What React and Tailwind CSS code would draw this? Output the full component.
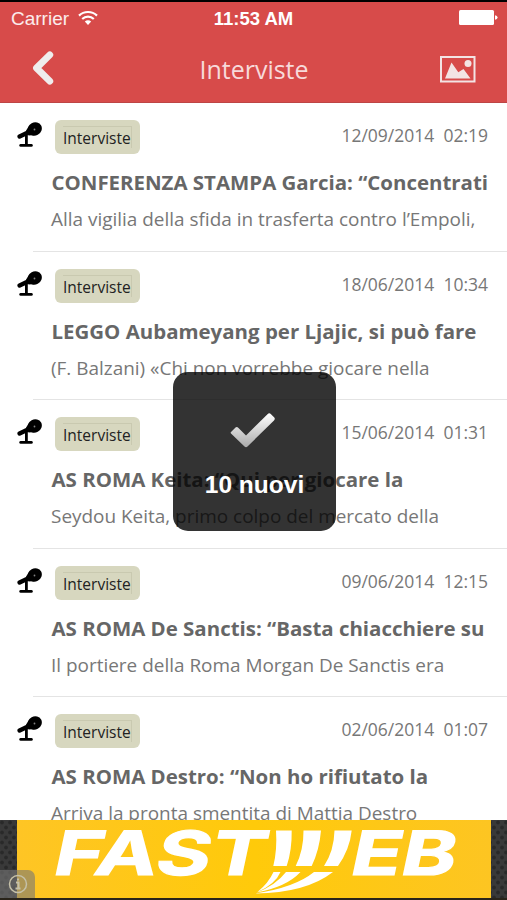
const articles = [
  {
    date: '12/09/2014',
    time: '02:19',
    title: 'CONFERENZA STAMPA Garcia: “Concentrati',
    excerpt: 'Alla vigilia della sfida in trasferta contro l’Empoli,',
  },
  {
    date: '18/06/2014',
    time: '10:34',
    title: 'LEGGO Aubameyang per Ljajic, si può fare',
    excerpt: '(F. Balzani) «Chi non vorrebbe giocare nella',
  },
  {
    date: '15/06/2014',
    time: '01:31',
    title: 'AS ROMA Keita: “Qui per giocare la',
    excerpt: 'Seydou Keita, primo colpo del mercato della',
  },
  {
    date: '09/06/2014',
    time: '12:15',
    title: 'AS ROMA De Sanctis: “Basta chiacchiere su',
    excerpt: 'Il portiere della Roma Morgan De Sanctis era',
  },
  {
    date: '02/06/2014',
    time: '01:07',
    title: 'AS ROMA Destro: “Non ho rifiutato la',
    excerpt: 'Arriva la pronta smentita di Mattia Destro',
  },
];

const WifiIcon = () => (
  <svg className="w-5 h-4" viewBox="0 0 20 16" fill="none" stroke="white" strokeWidth="2.2">
    <path d="M1 5.6a13 13 0 0 1 18 0" />
    <path d="M4.2 9a8.4 8.4 0 0 1 11.6 0" />
    <path d="M6.8 11.6a4.8 4.8 0 0 1 6.4 0L10 15z" fill="white" stroke="none" />
  </svg>
);

const BatteryIcon = () => (
  <svg className="w-[39px] h-[15px]" viewBox="0 0 39 15" fill="white">
    <rect width="35" height="15" rx="1.5" />
    <path d="M36 5.2q2.6.6 2.6 2.3T36 9.8z" />
  </svg>
);

const MicIcon = () => (
  <svg className="w-[26px] h-[26px] shrink-0" viewBox="0 0 26 26" fill="black">
    <path d="M2.6 14.5 12.5 9.8" fill="none" stroke="black" strokeWidth="4.4" strokeLinecap="round" />
    <path d="M9 8.5 12 4.500 18 13 11.500 13.500z" />
    <ellipse cx="17.700" cy="7" rx="7.300" ry="6.500" transform="rotate(-28 17.700 7)" />
    <path d="M8 13h2.800v10H8z" />
    <rect x="2.300" y="22" width="13.500" height="2.800" rx="1.400" />
    <circle cx="17.500" cy="7.500" r=".9" fill="white" opacity=".5" />
  </svg>
);

const StatusBar = () => (
  <div className="relative flex h-8 items-center justify-between border-t-2 border-black pl-[11px] pr-[9px] pt-px font-['Liberation_Sans',sans-serif] text-[19px] text-white">
    <div className="flex items-center gap-[9px]">
      <span className="pt-[2px] leading-6 text-white/90">Carrier</span>
      <WifiIcon />
    </div>
    <span className="absolute inset-x-0 pt-[2px] text-center text-[18.5px] font-bold">11:53 AM</span>
    <BatteryIcon />
  </div>
);

const Header = ({ title }) => (
  <header className="h-[103px] shrink-0 border-b border-[#bd4545] bg-[#d74b4a]">
    <StatusBar />
    <div className="flex h-[70px] items-center justify-between pl-8 pr-[31px]">
      <button type="button" aria-label="Indietro" className="w-9 pt-[2px]">
        <svg className="h-[36px] w-[22px]" viewBox="0 0 22 36" fill="none" stroke="#efeded" strokeWidth="6.8" strokeLinecap="round" strokeLinejoin="round">
          <path d="M17.8 4.8 4.5 18 17.8 31.2" />
        </svg>
      </button>
      <h1 className="text-[25px] leading-8 text-[#f7dada] pt-1">{title}</h1>
      <button type="button" aria-label="Galleria" className="w-9 pt-[4px]">
        <svg className="h-[27px] w-9" viewBox="0 0 36 27" fill="#f3e4e4">
          <rect x="1" y="1" width="33.5" height="24.5" fill="none" stroke="#f3e4e4" strokeWidth="2" />
          <path d="M5 22.5 11.5 6.5l6.8 9.8 5.2-3.3 7 9.5z" />
          <circle cx="28" cy="7.5" r="3.5" />
        </svg>
      </button>
    </div>
  </header>
);

const ArticleRow = ({ date, time, title, excerpt }) => (
  <li className="h-[148.6px] shrink-0 pl-[33px]">
    <div className="h-full border-b border-[#e4e4e4] pt-[17px]">
      <div className="-ml-4 flex h-[34px] pr-[19px]">
        <div className="pt-[2px]">
          <MicIcon />
        </div>
        <span className="ml-3 flex h-[34px] w-[85px] items-center justify-center rounded-[6px] bg-[#d7d7bf] text-[#222]">
          <span className="h-[22px] w-[69px] border-r border-t border-[#c9c9b0] text-[15.5px] leading-[23px]">Interviste</span>
        </span>
        <span className="ml-auto whitespace-pre text-[17.5px] leading-[30px] text-[#777]">{date}  {time}</span>
      </div>
      <h2 className="ml-[18.5px] mt-[14px] whitespace-nowrap text-[20.45px] font-bold leading-7 text-[#666]">{title}</h2>
      <p className="ml-[18px] mt-[9px] whitespace-nowrap text-[18.95px] leading-7 text-[#777]">{excerpt}</p>
    </div>
  </li>
);

const Toast = ({ message }) => (
  <div className="absolute left-[173px] top-[372px] flex h-[159px] w-[163px] flex-col items-center rounded-[15px] bg-black/80">
    <svg className="mt-[40px] mr-1 h-[37px] w-[48px]" viewBox="0 0 48 37">
      <defs>
        <linearGradient id="check" x1="0" y1="0" x2="0" y2="1">
          <stop offset="0" stopColor="#fff" />
          <stop offset="1" stopColor="#aaa" />
        </linearGradient>
      </defs>
      <path d="M2 20 6.5 15.5Q8 14.5 9.5 16L17 23.5 38.5 2.2Q40.3.5 42 2.2L45.3 5.5Q46.5 7 45 8.5L18.5 34.5Q17 36 15.5 34.5L2 21.5Q1.2 20.8 2 20z" fill="url(#check)" />
    </svg>
    <p className="mt-[22px] font-['Liberation_Sans',sans-serif] text-[24.5px] font-bold leading-7 text-white">{message}</p>
  </div>
);

const AdBanner = () => (
  <div className="relative h-20 shrink-0 border-b-2 border-[#29241a] bg-[#353535]">
    <svg className="block h-[78px] w-full" viewBox="0 0 507 78">
      <defs>
        <pattern id="mesh" width="8" height="10" patternUnits="userSpaceOnUse">
          <rect width="8" height="10" fill="#393939" />
          <circle cx="2" cy="2.5" r="1.9" fill="#292929" />
          <circle cx="6" cy="7.5" r="1.9" fill="#292929" />
        </pattern>
        <linearGradient id="gold">
          <stop offset="0" stopColor="#fec525" />
          <stop offset=".5" stopColor="#ffca0a" />
          <stop offset="1" stopColor="#fdc522" />
        </linearGradient>
      </defs>
      <rect width="507" height="78" fill="url(#mesh)" />
      <rect x="17" width="474" height="78" fill="url(#gold)" />
      <g className="font-[Inter,sans-serif] font-bold" fill="white" stroke="white" strokeWidth="1.2" fontSize="61">
        <text transform="translate(51 55.3) skewX(-12)" textLength="212" lengthAdjust="spacingAndGlyphs">FAST</text>
        <text transform="translate(348 55.3) skewX(-12)" textLength="105" lengthAdjust="spacingAndGlyphs">EB</text>
      </g>
      {/* striped mark between the two halves of the wordmark */}
      <g fill="white">
        <path d="M276 10.5h15.7q.3 20-5 35.5h-13.4q4-16 2.7-35.5z" />
        <path d="M303.5 10.5h17.5q-1.5 19-9.3 35.5h-16q8-16 7.8-35.5z" />
        <path d="M334.5 10.5h17.2q-2 19-13.7 35.5h-14q10-15 10.5-35.5z" />
        <path d="M273.5 52h7q-5 12-23 20 11-9 16-20z" />
        <path d="M286 52h14.5q-14 15-44 20.5 19-7 29.5-20.5z" />
        <path d="M314 52h19q-27 21-78 21.5 40-6 59-21.5z" />
      </g>
    </svg>
    <div className="absolute bottom-0 left-0 flex h-7 w-[35px] items-center justify-center rounded-tr-[7px] bg-[#777]/60">
      <svg className="h-5 w-5" viewBox="0 0 20 20" fill="none" stroke="#c5c0a8" strokeWidth="1.5">
        <circle cx="10" cy="10" r="8.5" />
        <path d="M8 8.5h2.500v6M7.500 14.500h5M10 4.500v2" strokeWidth="2" />
      </svg>
    </div>
  </div>
);

export default function App() {
  return (
    <div className="relative flex h-[900px] w-[507px] flex-col overflow-hidden bg-white font-['Open_Sans',sans-serif]">
      <Header title="Interviste" />
      <ul className="flex min-h-0 flex-1 flex-col overflow-hidden">
        {articles.map((article) => (
          <ArticleRow key={article.date} {...article} />
        ))}
      </ul>
      <AdBanner />
      <Toast message="10 nuovi" />
    </div>
  );
}
